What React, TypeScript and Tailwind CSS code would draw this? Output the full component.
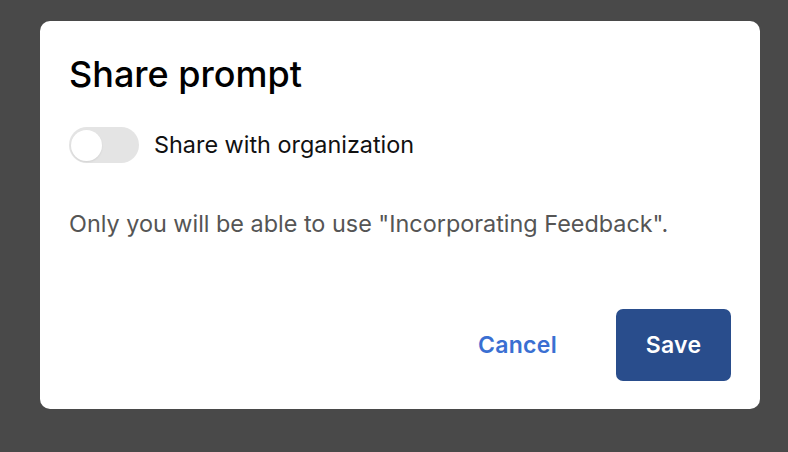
import React, { useState } from "react";

const App = () => {
  const [shared, setShared] = useState(false);
  const promptName = "Incorporating Feedback";

  return (
    <div
      className="h-[452px] w-full overflow-hidden bg-[#494949] pl-[40px] pt-[21px]"
      style={{ fontFamily: "Inter, 'Noto Sans', sans-serif" }}
    >
      <div className="flex h-[388px] w-[720px] flex-col rounded-[10px] bg-white px-[29px] pt-[33px] pb-[28px]">
        <h2 className="text-[36px] leading-[40px] font-medium text-black">
          Share prompt
        </h2>

        <div className="mt-[33px] flex items-center gap-[15px]">
          <button
            type="button"
            role="switch"
            aria-checked={shared}
            onClick={() => setShared(!shared)}
            className={`flex h-[36px] w-[70px] items-center rounded-full px-[2px] ${
              shared ? "bg-[#2a4d8c] justify-end" : "bg-[#e4e4e4] justify-start"
            }`}
          >
            <span className="block h-[31px] w-[31px] rounded-full bg-white shadow-[0_1px_2px_rgba(0,0,0,0.08)]" />
          </button>
          <span className="text-[23.4px] leading-[28px] text-[#111111]">
            Share with organization
          </span>
        </div>

        <p className="mt-[47px] text-[23.4px] leading-[28px] text-[#555555]">
          {shared
            ? `Everyone in your organization will be able to use "${promptName}".`
            : `Only you will be able to use "${promptName}".`}
        </p>

        <div className="mt-auto flex items-center justify-end gap-[59px]">
          <button
            type="button"
            className="text-[23px] font-semibold tracking-[0.3px] text-[#3a6fd2]"
          >
            Cancel
          </button>
          <button
            type="button"
            className="h-[72px] w-[115px] rounded-[7px] bg-[#294d8c] text-[23px] font-semibold tracking-[0.3px] text-white"
          >
            Save
          </button>
        </div>
      </div>
    </div>
  );
};

export default App;
